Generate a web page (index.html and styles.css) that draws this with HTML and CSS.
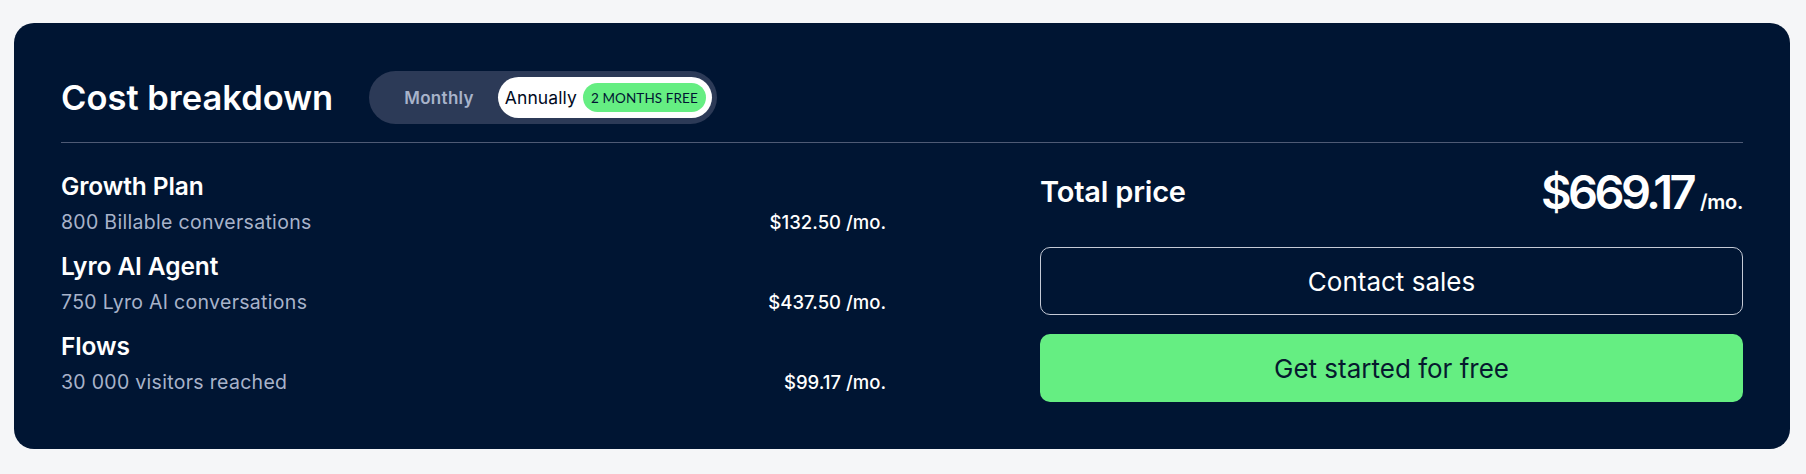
FILE: index.html
```html
<!DOCTYPE html>
<html lang="en">
<head>
<meta charset="utf-8">
<title>Cost breakdown</title>
<link rel="stylesheet" href="styles.css">
</head>
<body>
<section class="card">
  <header class="card-head">
    <h2 class="title">Cost breakdown</h2>
    <div class="toggle">
      <span class="opt">Monthly</span>
      <span class="opt opt-active">Annually <span class="badge">2 MONTHS FREE</span></span>
    </div>
  </header>
  <div class="card-body">
    <div class="items">
      <div class="item">
        <div class="item-name">Growth Plan</div>
        <div class="item-row"><span class="item-desc">800 Billable conversations</span><span class="item-price">$132.50 /mo.</span></div>
      </div>
      <div class="item">
        <div class="item-name">Lyro AI Agent</div>
        <div class="item-row"><span class="item-desc">750 Lyro AI conversations</span><span class="item-price">$437.50 /mo.</span></div>
      </div>
      <div class="item">
        <div class="item-name">Flows</div>
        <div class="item-row"><span class="item-desc">30 000 visitors reached</span><span class="item-price">$99.17 /mo.</span></div>
      </div>
    </div>
    <div class="summary">
      <div class="total">
        <span class="total-label">Total price</span>
        <span class="total-value"><span class="amount">$669.17</span><span class="per">/mo.</span></span>
      </div>
      <button class="btn btn-outline" type="button">Contact sales</button>
      <button class="btn btn-green" type="button">Get started for free</button>
    </div>
  </div>
</section>
</body>
</html>
```

FILE: styles.css
```css
* { box-sizing: border-box; }
html, body { margin: 0; }
body {
  background: #f5f6f8;
  padding: 23px 16px 24px 14px;
  font-family: Inter, "Open Sans", sans-serif;
}
.card {
  background: #001533;
  border-radius: 20px;
  padding: 48px 47px 47px 47px;
  color: #ffffff;
}
.card-head {
  display: flex;
  align-items: center;
  gap: 36px;
  padding-bottom: 18px;
  border-bottom: 1px solid #4e5a75;
}
.title {
  margin: 0;
  font-size: 34.5px;
  font-weight: 600;
  line-height: 53px;
  letter-spacing: 0;
}
.toggle {
  display: flex;
  align-items: center;
  height: 53px;
  padding: 6px 5px 6px 35px;
  background: #2c3a57;
  border-radius: 27px;
  gap: 24px;
}
.opt {
  font-size: 17px;
  color: #a8b3ca;
  font-weight: 600;
  letter-spacing: 0.3px;
}
.opt-active {
  display: flex;
  align-items: center;
  gap: 6px;
  height: 41px;
  padding: 0 6px 0 7px;
  background: #ffffff;
  border-radius: 21px;
  color: #000a1e;
  font-weight: 400;
  font-size: 17.5px;
  letter-spacing: 0.1px;
}
.badge {
  display: inline-flex;
  align-items: center;
  height: 29px;
  padding: 0 8px;
  border-radius: 15px;
  background: #65ee82;
  color: #001533;
  font-family: Lato, "Open Sans", sans-serif;
  font-size: 13.5px;
  font-weight: 400;
}
.card-body {
  display: flex;
  justify-content: space-between;
  align-items: flex-start;
  padding-top: 28px;
}
.items {
  width: 825px;
  display: flex;
  flex-direction: column;
  gap: 16px;
}
.item-name {
  font-size: 24.5px;
  font-weight: 600;
  line-height: 30px;
  letter-spacing: -0.1px;
}
.item-row {
  display: flex;
  justify-content: space-between;
  align-items: baseline;
  margin-top: 8px;
  line-height: 26px;
}
.item-desc {
  font-size: 19.5px;
  color: #a8b3ca;
  letter-spacing: 0.3px;
}
.item-price {
  font-size: 18.5px;
  font-weight: 500;
  color: #ffffff;
  letter-spacing: 0;
}
.summary {
  width: 703px;
  display: flex;
  flex-direction: column;
}
.total {
  display: flex;
  justify-content: space-between;
  align-items: center;
  height: 41px;
  margin-bottom: 35px;
}
.total-label {
  font-size: 29px;
  font-weight: 600;
  line-height: 41px;
  letter-spacing: -0.2px;
}
.total-value {
  display: flex;
  align-items: baseline;
  gap: 7px;
}
.amount {
  font-size: 47px;
  font-weight: 600;
  line-height: 47px;
  letter-spacing: -3.6px;
}
.per {
  font-size: 20px;
  font-weight: 600;
  letter-spacing: -0.3px;
}
.btn {
  display: flex;
  align-items: center;
  justify-content: center;
  width: 100%;
  height: 68px;
  border-radius: 10px;
  font-family: inherit;
  font-size: 26px;
  cursor: pointer;
}
.btn-outline {
  background: transparent;
  border: 1px solid #c5cad6;
  color: #ffffff;
  margin-bottom: 19px;
}
.btn-green {
  background: #65ee82;
  border: none;
  color: #061a2e;
}
```
